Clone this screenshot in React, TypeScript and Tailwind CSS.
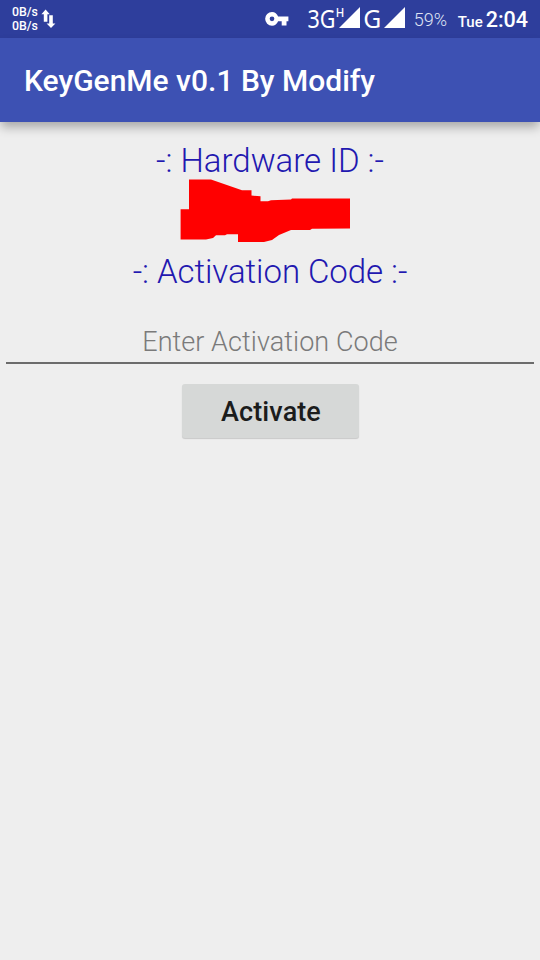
import React from 'react'

// Upload / download speed indicator
function NetworkSpeed() {
  return (
    <div className="flex items-center">
      <div className="w-[27px] text-[12.3px] leading-[14px] font-medium whitespace-nowrap">
        <p>0B/s</p>
        <p>0B/s</p>
      </div>
      <svg className="ml-[2px] h-[20px] w-[15px]" viewBox="0 0 15 20" fill="currentColor">
        <path d="M4.6 0.6L8.8 5.2H6.4V12.8H2.8V5.2H0.4Z" />
        <path d="M8.2 6.3H11.8V14.4H14.4L10 19L5.6 14.4H8.2Z" />
      </svg>
    </div>
  )
}

function KeyIcon() {
  return (
    <svg className="h-[14px] w-[24px]" viewBox="0 0 24 14" fill="currentColor" fillRule="evenodd">
      <path d="M7 0C9.9 0 12.1 1.8 13.1 4.5H23.4V9.2H21.5V13.4H16.7V9.2H13.1C12.1 11.9 9.9 13.7 7 13.7A6.85 6.85 0 0 1 7 0ZM7 4.5A2.35 2.35 0 1 0 7 9.2A2.35 2.35 0 0 0 7 4.5Z" />
    </svg>
  )
}

function SignalIcons() {
  return (
    <svg
      className="h-[38px] w-[100px] font-['Noto_Sans','Open_Sans',sans-serif]"
      viewBox="0 0 100 38"
      fill="currentColor"
    >
      <text x="0.5" y="27.5" fontSize="26" textLength="28" lengthAdjust="spacingAndGlyphs">3G</text>
      <text x="28.8" y="16.5" fontSize="12.5" fontWeight="500" textLength="8.5" lengthAdjust="spacingAndGlyphs">H</text>
      <path d="M32 28L53 7V28Z" />
      <text x="56.3" y="27.5" fontSize="26" textLength="18" lengthAdjust="spacingAndGlyphs">G</text>
      <path d="M77 28L98 7V28Z" />
    </svg>
  )
}

function StatusBar() {
  return (
    <header className="flex h-[38px] items-center bg-[#2e3e9c] pl-[12px] pr-[12px] text-white">
      <NetworkSpeed />
      <div className="ml-auto flex items-center">
        <KeyIcon />
        <div className="ml-[18px]">
          <SignalIcons />
        </div>
        <span className="ml-[7px] w-[34px] pt-[2px] text-[18px] leading-[38px] font-light whitespace-nowrap text-[#dfe2f3]">59%</span>
        <div className="ml-[10px] flex items-baseline pt-[4px] leading-[38px] font-medium whitespace-nowrap">
          <span className="text-[15px]">Tue</span>
          <span className="ml-[3px] text-[21.5px]">2:04</span>
        </div>
      </div>
    </header>
  )
}

// Red scribble that hides the hardware id
function RedactedId() {
  return (
    <svg className="h-[64px] w-[170px]" viewBox="180 179 170 64" fill="#ff0000">
      <path d="M189 179.5H211L242 190.3H251.5V195.5L260.5 196.3V201.3H268L271 200.2L291 199.5L292 198.6H350V228.6L312 228.8L310 230H291L279 235L272 240L264 242H238V234.3H227L225 235.3H216L213 238L206 239.5H180.6V209.3H189Z" />
    </svg>
  )
}

export default function App() {
  return (
    <div className="flex h-[960px] w-[540px] flex-col overflow-hidden bg-[#eeeeee] font-['Roboto',sans-serif]">
      <StatusBar />
      <div className="z-10 flex h-[84px] items-center bg-[#3d51b3] px-[24px] pt-[2px] shadow-[0_6px_10px_-1px_rgba(0,0,0,0.3)]">
        <h1 className="text-[30px] leading-[36px] font-medium whitespace-nowrap text-white">KeyGenMe v0.1 By Modify</h1>
      </div>

      <main className="flex flex-col items-center px-[6px] pt-[19px]">
        <h2 className="text-[33px] leading-[39px] font-light text-[#2218b0]">-: Hardware ID :-</h2>
        <div className="-mt-px mr-[10px] flex">
          <RedactedId />
        </div>
        <h2 className="mt-[9px] text-[33px] leading-[39px] font-light tracking-[-0.06px] text-[#2218b0]">-: Activation Code :-</h2>
        <input
          type="text"
          placeholder="Enter Activation Code"
          className="mt-[29px] h-[44px] w-full border-b-2 border-[#6b6b6b] bg-transparent pt-[1px] text-center text-[27px] font-light tracking-[0.06px] text-black outline-none placeholder:text-[#7a7a7a]"
        />
        <button
          type="button"
          className="mt-[20px] h-[54px] w-[177px] rounded-[3px] bg-[#d6d8d7] pt-[2px] pl-[2px] text-[27px] font-medium tracking-[0.1px] text-[#1b1c1c] shadow-[0_1px_1px_rgba(0,0,0,0.16)]"
        >
          Activate
        </button>
      </main>
    </div>
  )
}
